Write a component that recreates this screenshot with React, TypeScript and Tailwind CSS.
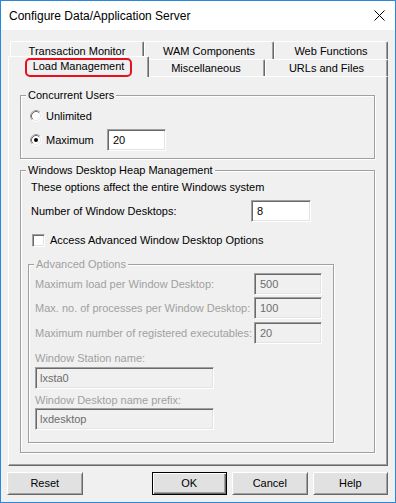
import React from "react";

const sunken =
  "border border-t-[#a0a0a0] border-l-[#a0a0a0] border-r-white border-b-white shadow-[inset_1px_1px_0_#696969,inset_-1px_-1px_0_#e3e3e3]";

function Radio({ checked }: { checked?: boolean }) {
  return (
    <svg width="12" height="12" viewBox="0 0 12 12" className="shrink-0">
      <circle cx="6" cy="6" r="5" fill="#fff" />
      <path d="M2.11 9.89 A5.5 5.5 0 0 1 9.89 2.11" fill="none" stroke="#a0a0a0" strokeWidth="1" />
      <path d="M9.89 2.11 A5.5 5.5 0 0 1 2.11 9.89" fill="none" stroke="#ffffff" strokeWidth="1" />
      <path d="M2.82 9.18 A4.5 4.5 0 0 1 9.18 2.82" fill="none" stroke="#696969" strokeWidth="1" />
      <path d="M9.18 2.82 A4.5 4.5 0 0 1 2.82 9.18" fill="none" stroke="#e3e3e3" strokeWidth="1" />
      {checked && <circle cx="6" cy="6" r="2" fill="#000" />}
    </svg>
  );
}

function Group({
  title,
  disabled,
  className,
  children,
}: {
  title: string;
  disabled?: boolean;
  className?: string;
  children: React.ReactNode;
}) {
  return (
    <fieldset
      className={
        "m-0 min-w-0 p-0 border border-[#a0a0a0] shadow-[1px_1px_0_#ffffff,inset_1px_1px_0_#ffffff] " +
        (className ?? "")
      }
    >
      <legend
        className={
          "ml-[5px] px-[2px] leading-[13px] bg-[#f0f0f0] " +
          (disabled ? "text-[#a0a0a0]" : "text-black")
        }
      >
        {title}
      </legend>
      {children}
    </fieldset>
  );
}

function Tab({ label, className }: { label: string; className?: string }) {
  return (
    <div
      className={
        "flex justify-center border-l border-t border-r border-l-white border-t-white border-r-[#696969] shadow-[inset_-1px_0_0_#a0a0a0] rounded-t-[2px] bg-[#f0f0f0] leading-[13px] " +
        (className ?? "")
      }
    >
      <span>{label}</span>
    </div>
  );
}

function Btn({
  label,
  isDefault,
  className,
}: {
  label: string;
  isDefault?: boolean;
  className?: string;
}) {
  return (
    <div
      className={
        "h-[23px] w-[76px] flex items-center justify-center bg-[#e1e1e1] text-black " +
        (isDefault
          ? "border border-black shadow-[inset_1px_1px_0_#ffffff,inset_-1px_-1px_0_#696969,inset_-2px_-2px_0_#a0a0a0] "
          : "border border-t-white border-l-white border-r-[#696969] border-b-[#696969] shadow-[inset_1px_1px_0_#e3e3e3,inset_-1px_-1px_0_#a0a0a0] ") +
        (className ?? "")
      }
    >
      {label}
    </div>
  );
}

function DisabledRow({ label, value }: { label: string; value: string }) {
  return (
    <div className="flex items-center h-[22px]">
      <span className="w-[219px] text-[#a0a0a0]">{label}</span>
      <div className={"w-[68px] h-[22px] flex items-center pl-[5px] bg-[#f0f0f0] text-[#6d6d6d] " + sunken}>
        {value}
      </div>
    </div>
  );
}

export default function App() {
  return (
    <div className="w-[396px] h-[503px] border border-[#2b87d8] bg-[#f0f0f0] flex flex-col font-['Liberation_Sans',Arial,sans-serif] text-[11px] text-black overflow-hidden">
      {/* Title bar */}
      <div className="h-[29px] bg-white flex items-center justify-between pl-[8px] pr-[10px] shrink-0">
        <span className="text-[12px] text-black">Configure Data/Application Server</span>
        <svg width="11" height="11" viewBox="0 0 11 11">
          <path d="M0.5 0.5 L10.5 10.5 M10.5 0.5 L0.5 10.5" stroke="#000" strokeWidth="1" />
        </svg>
      </div>

      <div className="flex flex-col pl-[7px] pr-[7px]">
        {/* Tabs */}
        <div className="mt-[11px] flex h-[18px] pl-[2px]">
          <Tab label="Transaction Monitor" className="w-[134px] pt-[3px]" />
          <Tab label="WAM Components" className="w-[130px] pt-[3px]" />
          <Tab label="Web Functions" className="w-[114px] pt-[3px]" />
        </div>
        <div className="flex h-[17px] items-end pl-[2px]">
          <div className="relative z-10 -ml-[2px] -mr-[2px] mb-[-1px] w-[141px] h-[21px] flex justify-center pt-[3px] leading-[13px] bg-[#f0f0f0] border-l border-t border-r border-l-white border-t-white border-r-[#696969] shadow-[inset_-1px_0_0_#a0a0a0] rounded-t-[2px]">
            <span>Load Management</span>
            <div className="absolute left-[16px] top-[1px] w-[107px] h-[19px] rounded-[5px] border-2 border-[#e8101c]" />
          </div>
          <Tab label="Miscellaneous" className="w-[118px] h-[17px] pt-[2px]" />
          <Tab label="URLs and Files" className="w-[123px] h-[17px] pt-[2px]" />
        </div>

        {/* Panel */}
        <div className="flex flex-col pt-[12px] pl-[11px] pr-[12px] pb-[12px] border border-l-white border-t-white border-r-[#696969] border-b-[#696969] shadow-[inset_-1px_-1px_0_#a0a0a0]">
          <Group title="Concurrent Users">
            <div className="flex flex-col pl-[9px] pb-[7px]">
              <div className="mt-[6px] h-[16px] flex items-center">
                <Radio />
                <span className="ml-[4px]">Unlimited</span>
              </div>
              <div className="mt-[5px] h-[22px] flex items-center">
                <Radio checked />
                <span className="ml-[4px] w-[61px]">Maximum</span>
                <div className={"w-[59px] h-[22px] flex items-center pl-[5px] bg-white " + sunken}>20</div>
              </div>
            </div>
          </Group>

          <Group title="Windows Desktop Heap Management" className="mt-[5px]">
            <div className="flex flex-col pl-[7px] pb-[9px]">
              <div className="mt-[4px] h-[13px] leading-[13px] pl-[3px]">
                These options affect the entire Windows system
              </div>
              <div className="mt-[6px] h-[22px] flex items-center pl-[3px]">
                <span className="w-[220px]">Number of Window Desktops:</span>
                <div className={"w-[60px] h-[22px] flex items-center pl-[5px] bg-white " + sunken}>8</div>
              </div>
              <div className="mt-[12px] h-[13px] flex items-center pl-[4px]">
                <div className={"w-[13px] h-[13px] bg-white " + sunken} />
                <span className="ml-[5px]">Access Advanced Window Desktop Options</span>
              </div>
              <Group title="Advanced Options" disabled className="mt-[11px] w-[306px]">
                <div className="flex flex-col pl-[6px] pb-[12px]">
                  <div className="mt-[2px]">
                    <DisabledRow label="Maximum load per Window Desktop:" value="500" />
                  </div>
                  <div className="mt-[2px]">
                    <DisabledRow label="Max. no. of processes per Window Desktop:" value="100" />
                  </div>
                  <div className="mt-[3px]">
                    <DisabledRow label="Maximum number of registered executables:" value="20" />
                  </div>
                  <div className="mt-[8px] h-[13px] leading-[13px] text-[#a0a0a0]">Window Station name:</div>
                  <div className={"mt-[2px] w-[179px] h-[22px] flex items-center pl-[4px] bg-[#f0f0f0] text-[#6d6d6d] " + sunken}>
                    lxsta0
                  </div>
                  <div className="mt-[5px] h-[13px] leading-[13px] text-[#a0a0a0]">Window Desktop name prefix:</div>
                  <div className={"mt-[1px] w-[179px] h-[22px] flex items-center pl-[4px] bg-[#f0f0f0] text-[#6d6d6d] " + sunken}>
                    lxdesktop
                  </div>
                </div>
              </Group>
            </div>
          </Group>
        </div>

        {/* Buttons */}
        <div className="mt-[6px] flex -ml-[1px]">
          <Btn label="Reset" />
          <Btn label="OK" isDefault className="ml-[69px]" />
          <Btn label="Cancel" className="ml-[5px]" />
          <Btn label="Help" className="ml-[5px]" />
        </div>
      </div>
    </div>
  );
}
